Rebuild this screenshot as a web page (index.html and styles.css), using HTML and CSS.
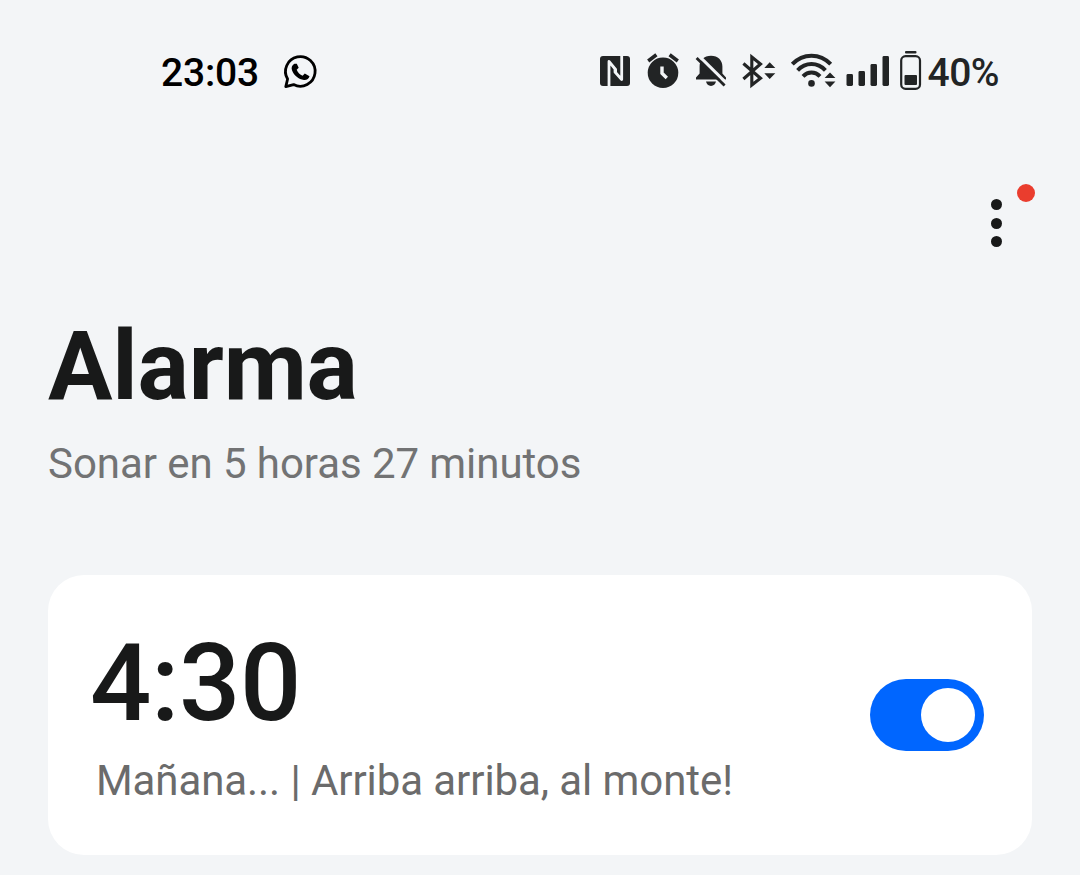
FILE: index.html
```html
<!DOCTYPE html>
<html lang="es">

<head>
    <meta charset="UTF-8">
    <meta name="viewport" content="width=device-width, initial-scale=1.0">
    <title>Alarma</title>
    <link rel="stylesheet" href="styles.css">
</head>

<body>
    <!-- Barra de estado -->
    <div class="status-bar">
        <span class="clock">23:03</span>
        <svg class="whatsapp" width="36" height="40" viewBox="0 0 36 40">
            <path d="M2.8 34.6 L4.6 27 A14.8 14.8 0 1 1 10.6 32.6 Z" fill="none" stroke="#000" stroke-width="2.8" stroke-linejoin="round" />
            <path d="M11.4 11.8 C9 13 8 15.6 9 18.2 C11 23.6 15.6 27.2 21 28 C23.8 28.2 26 26.6 26.5 24.2 L21.8 21.4 L19.6 23.8 C17 22.8 14.8 20.5 13.7 17.8 L15.7 15.7 L13.8 11.8 Z" fill="#000" />
        </svg>

        <div class="status-icons">
            <svg class="nfc" width="30" height="40" viewBox="0 0 30 40">
                <rect x="0" y="4" width="30" height="30" rx="3" fill="#222425" />
                <path d="M9 34 V9.5 L15.6 17.5 V20 M21.7 4 V27.5 L15 20 V17.5" fill="none" stroke="#f3f5f7" stroke-width="2.8" stroke-linejoin="round" />
            </svg>
            <svg class="alarm" width="34" height="40" viewBox="0 0 34 40">
                <circle cx="17" cy="20.7" r="15.3" fill="#222425" />
                <path d="M2.2 9 L10.4 2.8 M23.6 2.8 L31.8 9" stroke="#222425" stroke-width="3.6" />
                <path d="M16 14.5 V21.3 L20.8 26" fill="none" stroke="#f3f5f7" stroke-width="3.4" />
            </svg>
            <svg class="muted" width="34" height="40" viewBox="0 0 34 40">
                <path d="M2 27.4 V25.5 L5.6 21.5 V14.5 C5.6 8.5 10 3.8 17 3.8 C24 3.8 28.4 8.5 28.4 14.5 V21.5 L32 25.5 V27.4 Z M12 29.6 H22 C21.4 32.4 19.6 34 17 34 C14.4 34 12.6 32.4 12 29.6 Z" fill="#222425" />
                <path d="M4.6 3.6 L33.4 32.2" stroke="#f3f5f7" stroke-width="3.2" />
                <path d="M2.6 6 L30.6 33.6" stroke="#222425" stroke-width="2.8" />
            </svg>
            <svg class="bluetooth" width="36" height="40" viewBox="0 0 36 40">
                <path d="M2.4 11.5 L19.5 26.3 L10.8 33 V5 L19.5 12 L2.4 27" fill="none" stroke="#222425" stroke-width="3.1" />
                <path d="M23.3 16 L28.7 10.2 L34.3 16 Z M23.3 21.3 L28.7 27 L34.3 21.3 Z" fill="#222425" />
            </svg>
            <svg class="wifi" width="46" height="40" viewBox="0 0 46 40">
                <g fill="none" stroke="#222425" stroke-width="4">
                    <path d="M2.3 12.2 C13 0.9 30 0.9 40.7 12.2" />
                    <path d="M7.6 18.3 C15.5 10 27.5 10 35.4 18.3" />
                    <path d="M13 24.3 C18 19.2 25 19.2 30 24.3" />
                </g>
                <circle cx="21.5" cy="31.4" r="3.3" fill="#222425" />
                <path d="M34.6 26 L40 20.4 L45.4 26 Z M34.6 29.5 L40 35.2 L45.4 29.5 Z" fill="#222425" />
            </svg>
            <svg class="signal" width="44" height="40" viewBox="0 0 44 40">
                <g fill="#222425">
                    <rect x="0.5" y="22" width="6.5" height="12" rx="1.4" />
                    <rect x="12.5" y="19" width="6.5" height="15" rx="1.4" />
                    <rect x="24.5" y="12" width="6.5" height="22" rx="1.4" />
                    <rect x="36.5" y="4" width="6.5" height="30" rx="1.4" />
                </g>
            </svg>
            <svg class="battery" width="22" height="40" viewBox="0 0 22 40">
                <rect x="5" y="-1" width="11.5" height="2.4" rx="1" fill="#222425" />
                <rect x="1.2" y="4.2" width="18.8" height="32.6" rx="4.4" fill="none" stroke="#222425" stroke-width="2.2" />
                <rect x="4.5" y="23" width="12.5" height="10" rx="1" fill="#222425" />
            </svg>
            <span class="percent">40%</span>
        </div>
    </div>

    <!-- Menú -->
    <div class="toolbar">
        <div class="menu">
            <span class="menu-dot"></span>
            <span class="menu-dot"></span>
            <span class="menu-dot"></span>
            <span class="badge"></span>
        </div>
    </div>

    <h1 class="title">Alarma</h1>
    <p class="subtitle">Sonar en 5 horas 27 minutos</p>

    <!-- Tarjeta de la alarma -->
    <div class="alarm-card">
        <div class="alarm-info">
            <div class="alarm-time">4:30</div>
            <div class="alarm-label">Mañana... | Arriba arriba, al monte!</div>
        </div>
        <div class="switch">
            <div class="knob"></div>
        </div>
    </div>
</body>

</html>
```

FILE: styles.css
```css
* {
    box-sizing: border-box;
}

body {
    margin: 0;
    height: 875px;
    overflow: hidden;
    background-color: #f3f5f7;
    color: #181919;
    font-family: Roboto, sans-serif;
}

svg {
    display: block;
    flex: none;
    overflow: visible;
}

/* Barra de estado */
.status-bar {
    display: flex;
    height: 94px;
    padding: 52px 80px 0 161px;
    font-size: 39px;
    font-weight: 500;
    line-height: 42px;
}

.clock {
    width: 98px;
    color: #000;
    letter-spacing: -0.2px;
}

.whatsapp {
    margin-left: 23.5px;
}

.status-icons {
    display: flex;
    margin-left: 281.5px;
    color: #222425;
}

.alarm {
    margin-left: 16px;
}

.muted {
    margin-left: 14px;
}

.bluetooth {
    margin-left: 13px;
}

.wifi {
    margin-left: 13px;
}

.signal {
    margin-left: 10px;
}

.battery {
    margin-left: 10px;
}

.percent {
    margin-left: 5.5px;
    letter-spacing: -0.5px;
}

/* Menú de tres puntos */
.toolbar {
    display: flex;
    justify-content: flex-end;
    height: 216px;
    padding: 105px 78.5px 0 0;
}

.menu {
    position: relative;
    display: flex;
    flex-direction: column;
    gap: 7.5px;
    height: 48px;
}

.menu-dot {
    width: 11px;
    height: 11px;
    border-radius: 50%;
    background-color: #181919;
}

.badge {
    position: absolute;
    top: -15px;
    left: 26.5px;
    width: 18px;
    height: 18px;
    border-radius: 50%;
    background-color: #ea3d2e;
}

/* Título */
.title {
    margin: 0 48px;
    font-size: 96px;
    font-weight: 700;
    letter-spacing: -0.2px;
    line-height: 112px;
}

.subtitle {
    margin: 17px 48px 0;
    color: #727374;
    font-size: 42px;
    letter-spacing: -0.06px;
    line-height: 50px;
}

/* Tarjeta */
.alarm-card {
    display: flex;
    justify-content: space-between;
    align-items: center;
    height: 280px;
    margin: 86px 48px 0;
    padding: 0 48px;
    border-radius: 36px;
    background-color: #fff;
}

.alarm-info {
    height: 184px;
}

.alarm-time {
    margin-left: -6px;
    font-size: 108px;
    font-weight: 500;
    letter-spacing: -0.4px;
    line-height: 120px;
}

.alarm-label {
    margin-top: 13px;
    color: #6b6b6b;
    font-size: 42px;
    letter-spacing: -0.08px;
    line-height: 50px;
}

.switch {
    display: flex;
    justify-content: flex-end;
    width: 114px;
    height: 72px;
    padding: 9px;
    border-radius: 36px;
    background-color: #0066ff;
}

.knob {
    width: 54px;
    height: 54px;
    border-radius: 50%;
    background-color: #fff;
}
```
